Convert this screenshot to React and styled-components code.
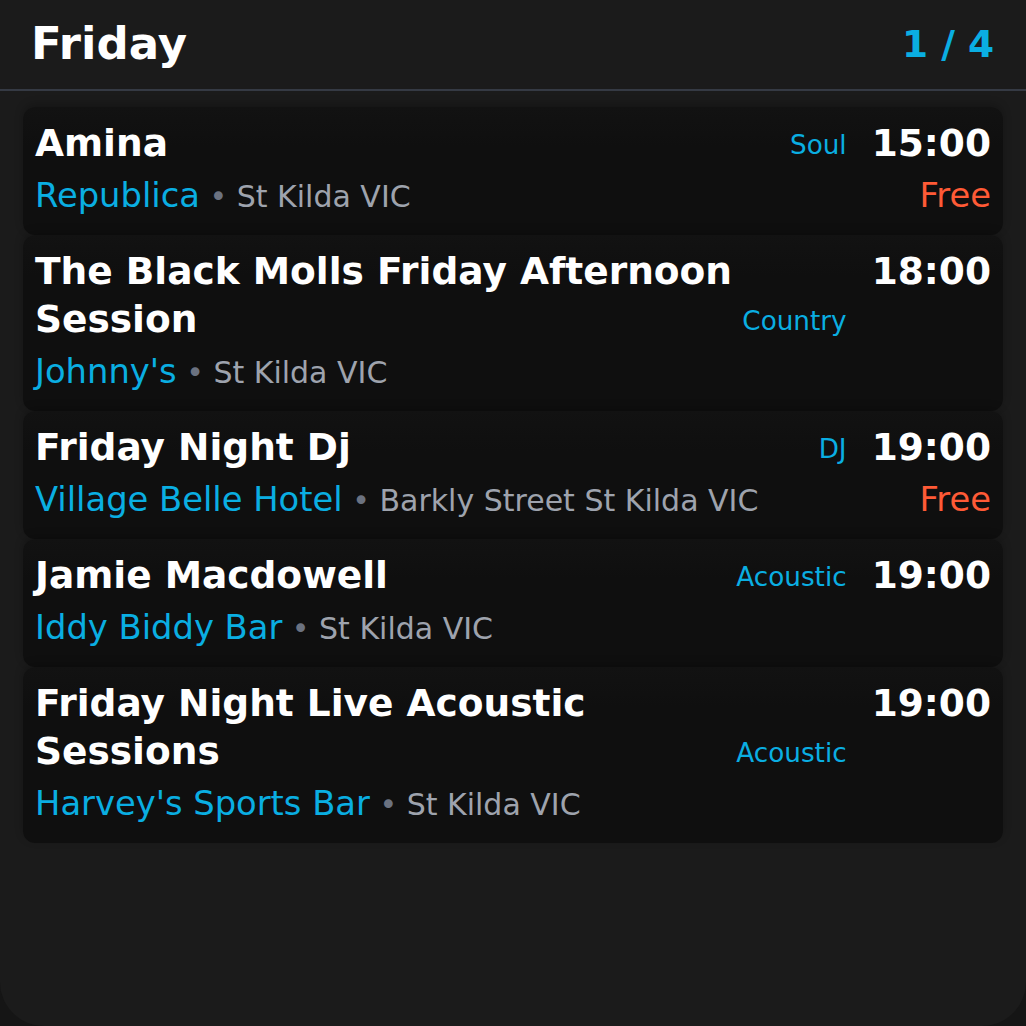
import React from "react";
import styled, { createGlobalStyle } from "styled-components";

const events = [
  { title: "Amina", venue: "Republica", place: "St Kilda VIC", genre: "Soul", time: "15:00", price: "Free" },
  { title: "The Black Molls Friday Afternoon Session", venue: "Johnny's", place: "St Kilda VIC", genre: "Country", time: "18:00" },
  { title: "Friday Night Dj", venue: "Village Belle Hotel", place: "Barkly Street St Kilda VIC", genre: "DJ", time: "19:00", price: "Free" },
  { title: "Jamie Macdowell", venue: "Iddy Biddy Bar", place: "St Kilda VIC", genre: "Acoustic", time: "19:00" },
  { title: "Friday Night Live Acoustic Sessions", venue: "Harvey's Sports Bar", place: "St Kilda VIC", genre: "Acoustic", time: "19:00" },
];

const App = () => {
  return (
    <>
      <Global />
      <Panel>
        <Header>
          <Day>Friday</Day>
          <Pager>1 / 4</Pager>
        </Header>
        <List>
          {events.map((e, i) => (
            <Card key={i}>
              <TopRow>
                <Title>{e.title}</Title>
                <Genre>{e.genre}</Genre>
                <Time>{e.time}</Time>
              </TopRow>
              <BottomRow>
                <Venue>
                  <VenueName>{e.venue}</VenueName>
                  <Place>
                    <Dot> • </Dot>
                    {e.place}
                  </Place>
                </Venue>
                {e.price && <Price>{e.price}</Price>}
              </BottomRow>
            </Card>
          ))}
        </List>
      </Panel>
    </>
  );
};

export default App;

const Global = createGlobalStyle`
  html, body {
    margin: 0;
    padding: 0;
    background: #151515;
  }
  * {
    box-sizing: border-box;
  }
`;

const Panel = styled.div`
  width: 1026px;
  height: 1026px;
  background: #1b1b1b;
  border-radius: 0 0 44px 44px;
  font-family: "DejaVu Sans", sans-serif;
  overflow: hidden;
`;

const Header = styled.div`
  display: flex;
  justify-content: space-between;
  align-items: center;
  height: 91px;
  padding: 0 32px 2px 31px;
  border-bottom: 2px solid #353a44;
`;

const Day = styled.h1`
  margin: 0;
  font-size: 45px;
  line-height: 56px;
  font-weight: 700;
  color: #ffffff;
`;

const Pager = styled.span`
  font-size: 37.5px;
  font-weight: 700;
  color: #0aaee2;
`;

const List = styled.div`
  display: flex;
  flex-direction: column;
  padding: 16px 23px 0;
`;

const Card = styled.div`
  background: linear-gradient(#121212, #0f0f0f 40px);
  border-radius: 12px;
  padding: 12px 12px 18px;
  box-shadow: 0 -3px 8px rgba(0, 0, 0, 0.22);
`;

const TopRow = styled.div`
  display: flex;
  align-items: flex-start;
`;

const Title = styled.div`
  flex: 1;
  font-size: 37.5px;
  line-height: 48px;
  font-weight: 700;
  color: #ffffff;
`;

const Genre = styled.div`
  align-self: flex-end;
  margin: 0 25px 5px 4px;
  font-size: 26.25px;
  line-height: 34px;
  color: #0aaee2;
`;

const Time = styled.div`
  font-size: 37.5px;
  line-height: 48px;
  font-weight: 700;
  color: #ffffff;
`;

const BottomRow = styled.div`
  display: flex;
  align-items: center;
  margin-top: 8px;
  height: 42px;
`;

const Venue = styled.div`
  flex: 1;
  font-size: 33.75px;
  line-height: 42px;
  white-space: nowrap;
`;

const VenueName = styled.span`
  color: #0aaee2;
`;

const Place = styled.span`
  font-size: 30px;
  color: #9ea3ad;
`;

const Dot = styled.span`
  color: #6b7280;
`;

const Price = styled.div`
  font-size: 33.75px;
  line-height: 42px;
  color: #ff5a36;
`;
